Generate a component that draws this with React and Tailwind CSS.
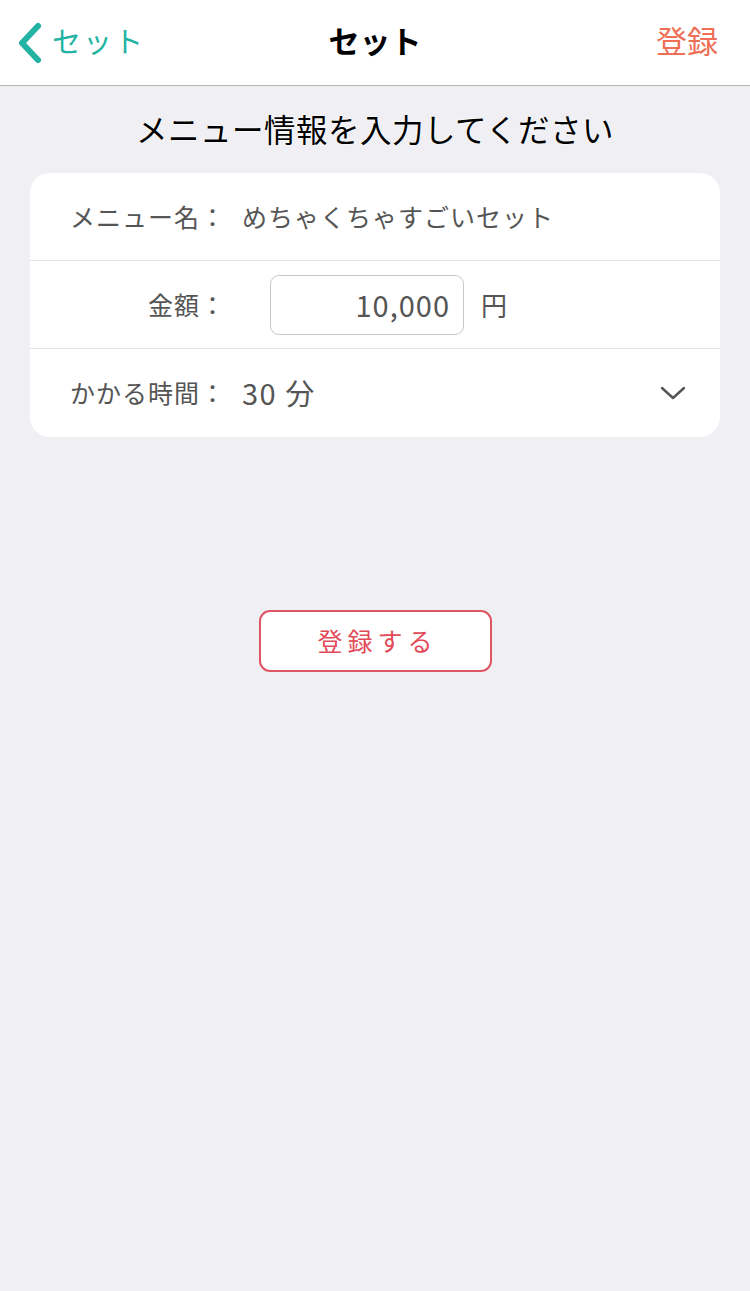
export default function App() {
  const font = { fontFamily: '"Noto Sans CJK JP", "Noto Sans", sans-serif' };
  return (
    <div className="w-[750px] h-[1291px] bg-[#efeff4] flex flex-col" style={font}>
      <header className="h-[86px] bg-white border-b border-[#b2b2b6] flex items-center justify-between relative shrink-0">
        <div className="flex items-center pl-[16px] gap-[8px] text-[#22b3a3]">
          <svg width="28" height="42" viewBox="0 0 28 42" fill="none">
            <path d="M22 4 L6 21 L22 38" stroke="#22b3a3" strokeWidth="6" strokeLinecap="round" strokeLinejoin="round" />
          </svg>
          <span className="text-[29px] leading-none tracking-[2px] mt-[-4px]">セット</span>
        </div>
        <div className="absolute left-0 right-0 text-center pointer-events-none text-[31px] font-bold text-black leading-none mt-[-6px]">
          セット
        </div>
        <div className="pr-[32px] text-[31px] text-[#ee6f55] leading-none mt-[-6px]">登録</div>
      </header>

      <div className="pt-[20px] text-center text-[31.5px] text-black leading-[44px] tracking-[0.5px] [text-shadow:0_0_2px_#fff,0_0_2px_#fff]">
        メニュー情報を入力してください
      </div>

      <div className="mx-[30px] mt-[23px] bg-white rounded-[20px] flex flex-col">
        <div className="h-[88px] flex items-center border-b border-[#e3e3e6]">
          <div className="w-[196px] shrink-0 text-right text-[25px] tracking-[1px] text-[#555]">メニュー名：</div>
          <div className="pl-[16px] text-[25px] text-[#555] tracking-[1px]">めちゃくちゃすごいセット</div>
        </div>
        <div className="h-[88px] flex items-center border-b border-[#e3e3e6]">
          <div className="w-[196px] shrink-0 text-right text-[25px] tracking-[1px] text-[#555]">金額：</div>
          <div className="ml-[44px] w-[194px] h-[60px] border border-[#c8c8cc] rounded-[9px] flex items-center justify-end pr-[13px] text-[29px] tracking-[1px] text-[#555]">
            10,000
          </div>
          <div className="ml-[17px] text-[26px] text-[#555]">円</div>
        </div>
        <div className="h-[88px] flex items-center">
          <div className="w-[196px] shrink-0 text-right text-[25px] tracking-[1px] text-[#555]">かかる時間：</div>
          <div className="pl-[16px] text-[29px] text-[#555] tracking-[1.5px]">30 分</div>
          <div className="ml-auto mr-[34px]">
            <svg width="26" height="16" viewBox="0 0 26 16" fill="none">
              <path d="M2 3 L13 13 L24 3" stroke="#555" strokeWidth="2.4" strokeLinecap="round" strokeLinejoin="round" />
            </svg>
          </div>
        </div>
      </div>

      <div className="flex justify-center mt-[173px]">
        <div className="w-[233px] h-[62px] bg-white border-2 border-[#e05563] rounded-[11px] flex items-center justify-center text-[25px] text-[#e24a58] tracking-[5px] pl-[5px]">
          登録する
        </div>
      </div>
    </div>
  );
}
